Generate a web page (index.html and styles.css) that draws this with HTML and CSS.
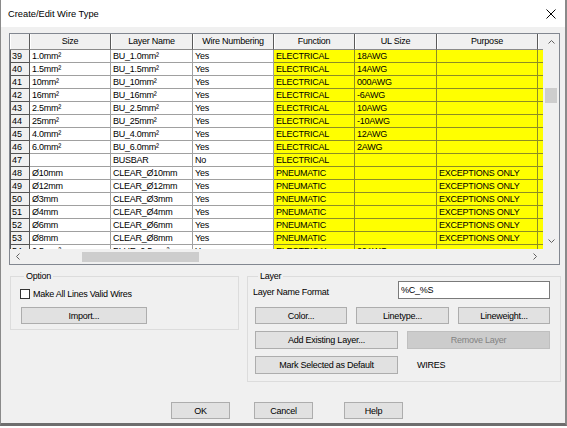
FILE: index.html
```html
<!DOCTYPE html>
<html lang="en">
<head>
    <meta charset="UTF-8">
    <title>Create/Edit Wire Type</title>
    <link rel="stylesheet" href="styles.css">
</head>
<body>
    <div class="window">
        <div class="titlebar">
            <span class="title">Create/Edit Wire Type</span>
            <span class="close">
                <svg width="10" height="10" viewBox="0 0 10 10"><path d="M0.5 0.5L9.5 9.5M9.5 0.5L0.5 9.5" stroke="#000" stroke-width="1"/></svg>
            </span>
        </div>
        <div class="content">
            <div class="grid">
                <div class="viewport">
                    <div class="row head">
                        <div class="c"></div><div class="c">Size</div><div class="c">Layer Name</div><div class="c">Wire Numbering</div><div class="c">Function</div><div class="c">UL Size</div><div class="c">Purpose</div><div class="c"></div>
                    </div>
                    <div class="row"><div class="c num">39</div><div class="c">1.0mm²</div><div class="c">BU_1.0mm²</div><div class="c">Yes</div><div class="c y">ELECTRICAL</div><div class="c y">18AWG</div><div class="c y"></div><div class="c y"></div></div>
                    <div class="row"><div class="c num">40</div><div class="c">1.5mm²</div><div class="c">BU_1.5mm²</div><div class="c">Yes</div><div class="c y">ELECTRICAL</div><div class="c y">14AWG</div><div class="c y"></div><div class="c y"></div></div>
                    <div class="row"><div class="c num">41</div><div class="c">10mm²</div><div class="c">BU_10mm²</div><div class="c">Yes</div><div class="c y">ELECTRICAL</div><div class="c y">000AWG</div><div class="c y"></div><div class="c y"></div></div>
                    <div class="row"><div class="c num">42</div><div class="c">16mm²</div><div class="c">BU_16mm²</div><div class="c">Yes</div><div class="c y">ELECTRICAL</div><div class="c y">-6AWG</div><div class="c y"></div><div class="c y"></div></div>
                    <div class="row"><div class="c num">43</div><div class="c">2.5mm²</div><div class="c">BU_2.5mm²</div><div class="c">Yes</div><div class="c y">ELECTRICAL</div><div class="c y">10AWG</div><div class="c y"></div><div class="c y"></div></div>
                    <div class="row"><div class="c num">44</div><div class="c">25mm²</div><div class="c">BU_25mm²</div><div class="c">Yes</div><div class="c y">ELECTRICAL</div><div class="c y">-10AWG</div><div class="c y"></div><div class="c y"></div></div>
                    <div class="row"><div class="c num">45</div><div class="c">4.0mm²</div><div class="c">BU_4.0mm²</div><div class="c">Yes</div><div class="c y">ELECTRICAL</div><div class="c y">12AWG</div><div class="c y"></div><div class="c y"></div></div>
                    <div class="row"><div class="c num">46</div><div class="c">6.0mm²</div><div class="c">BU_6.0mm²</div><div class="c">Yes</div><div class="c y">ELECTRICAL</div><div class="c y">2AWG</div><div class="c y"></div><div class="c y"></div></div>
                    <div class="row"><div class="c num">47</div><div class="c"></div><div class="c">BUSBAR</div><div class="c">No</div><div class="c y">ELECTRICAL</div><div class="c y"></div><div class="c y"></div><div class="c y"></div></div>
                    <div class="row"><div class="c num">48</div><div class="c">Ø10mm</div><div class="c">CLEAR_Ø10mm</div><div class="c">Yes</div><div class="c y">PNEUMATIC</div><div class="c y"></div><div class="c y">EXCEPTIONS ONLY</div><div class="c y"></div></div>
                    <div class="row"><div class="c num">49</div><div class="c">Ø12mm</div><div class="c">CLEAR_Ø12mm</div><div class="c">Yes</div><div class="c y">PNEUMATIC</div><div class="c y"></div><div class="c y">EXCEPTIONS ONLY</div><div class="c y"></div></div>
                    <div class="row"><div class="c num">50</div><div class="c">Ø3mm</div><div class="c">CLEAR_Ø3mm</div><div class="c">Yes</div><div class="c y">PNEUMATIC</div><div class="c y"></div><div class="c y">EXCEPTIONS ONLY</div><div class="c y"></div></div>
                    <div class="row"><div class="c num">51</div><div class="c">Ø4mm</div><div class="c">CLEAR_Ø4mm</div><div class="c">Yes</div><div class="c y">PNEUMATIC</div><div class="c y"></div><div class="c y">EXCEPTIONS ONLY</div><div class="c y"></div></div>
                    <div class="row"><div class="c num">52</div><div class="c">Ø6mm</div><div class="c">CLEAR_Ø6mm</div><div class="c">Yes</div><div class="c y">PNEUMATIC</div><div class="c y"></div><div class="c y">EXCEPTIONS ONLY</div><div class="c y"></div></div>
                    <div class="row"><div class="c num">53</div><div class="c">Ø8mm</div><div class="c">CLEAR_Ø8mm</div><div class="c">Yes</div><div class="c y">PNEUMATIC</div><div class="c y"></div><div class="c y">EXCEPTIONS ONLY</div><div class="c y"></div></div>
                    <div class="row"><div class="c num">54</div><div class="c">0.5mm²</div><div class="c">BLUE_0.5mm²</div><div class="c">Yes</div><div class="c y">ELECTRICAL</div><div class="c y">20AWG</div><div class="c y"></div><div class="c y"></div></div>
                </div>
                <div class="vscroll">
                    <div class="arrow"><svg width="7" height="4" viewBox="0 0 7 4"><polyline points="0.5,3.5 3.5,0.5 6.5,3.5" fill="none" stroke="#606060"/></svg></div>
                    <div class="track"><div class="thumb"></div></div>
                    <div class="arrow"><svg width="7" height="4" viewBox="0 0 7 4"><polyline points="0.5,0.5 3.5,3.5 6.5,0.5" fill="none" stroke="#606060"/></svg></div>
                </div>
                <div class="hscroll">
                    <div class="arrow"><svg width="4" height="7" viewBox="0 0 4 7"><polyline points="3.5,0.5 0.5,3.5 3.5,6.5" fill="none" stroke="#606060"/></svg></div>
                    <div class="track"><div class="thumb"></div></div>
                    <div class="arrow"><svg width="4" height="7" viewBox="0 0 4 7"><polyline points="0.5,0.5 3.5,3.5 0.5,6.5" fill="none" stroke="#606060"/></svg></div>
                </div>
                <div class="sizer"></div>
            </div>

            <div class="lower">
                <fieldset class="group option-group">
                    <legend>Option</legend>
                    <label class="check-row"><input type="checkbox"> Make All Lines Valid Wires</label>
                    <button type="button" class="btn import-btn">Import...</button>
                </fieldset>
                <fieldset class="group layer-group">
                    <legend>Layer</legend>
                    <div class="format-row">
                        <label for="layerFormat">Layer Name Format</label>
                        <input type="text" id="layerFormat" value="%C_%S">
                    </div>
                    <div class="btn-row">
                        <button type="button" class="btn third">Color...</button>
                        <button type="button" class="btn third wide">Linetype...</button>
                        <button type="button" class="btn third">Lineweight...</button>
                    </div>
                    <div class="btn-row">
                        <button type="button" class="btn half">Add Existing Layer...</button>
                        <button type="button" class="btn half" disabled>Remove Layer</button>
                    </div>
                    <div class="btn-row">
                        <button type="button" class="btn half">Mark Selected as Default</button>
                        <span class="default-name">WIRES</span>
                    </div>
                </fieldset>
            </div>

            <div class="footer">
                <button type="button" class="btn dlg">OK</button>
                <button type="button" class="btn dlg cancel">Cancel</button>
                <button type="button" class="btn dlg help">Help</button>
            </div>
        </div>
    </div>
</body>
</html>
```

FILE: styles.css
```css
body {
    margin: 0;
    padding: 0;
    background-color: #fff;
    font-family: "Liberation Sans", Arial, sans-serif;
    font-size: 9px;
    letter-spacing: -0.25px;
    color: #000;
}
.window {
    width: 567px;
    height: 426px;
    box-sizing: border-box;
    border-left: 1px solid #8a8a8a;
    border-right: 2px solid #8a8a8a;
    border-bottom: 3px solid #6e6e6e;
    background-color: #f0f0f0;
    display: flex;
    flex-direction: column;
}
.titlebar {
    height: 27px;
    flex: none;
    background-color: #fff;
    display: flex;
    align-items: center;
    justify-content: space-between;
    padding-left: 7px;
}
.title {
    font-size: 9.3px;
    letter-spacing: 0;
}
.close {
    width: 28px;
    height: 27px;
    display: flex;
    align-items: center;
    justify-content: center;
}
.content {
    padding: 6px 0 0 8px;
}

/* grid */
.grid {
    width: 551px;
    height: 232px;
    box-sizing: border-box;
    border: 1px solid #828790;
    display: grid;
    grid-template-columns: 533px 16px;
    grid-template-rows: 215px 15px;
    background-color: #f0f0f0;
}
.viewport {
    overflow: hidden;
    background-color: #fff;
}
.row {
    display: grid;
    grid-template-columns: 20px 81px 82px 81px 81px 82px 101px 40px;
    height: 13px;
}
.c {
    box-sizing: border-box;
    border-right: 1px solid #a0a0a0;
    border-bottom: 1px solid #a0a0a0;
    padding-left: 2px;
    line-height: 12px;
    white-space: nowrap;
    overflow: hidden;
}
.c.y {
    background-color: #ffff00;
    border-color: #8d8d24;
}
.c.num {
    background-color: #f0f0f0;
    border-right-color: #555;
    border-bottom-color: #555;
    box-shadow: inset 1px 0 0 #555;
    padding-left: 2px;
    letter-spacing: 0;
}
.row.head {
    height: 16px;
}
.head .c {
    background-color: #f0f0f0;
    border-right-color: #5a5a5a;
    border-bottom-color: #8a8a8a;
    box-shadow: inset 1px 0 0 #fff;
    text-align: center;
    line-height: 15px;
    padding-left: 0;
}
.vscroll {
    display: flex;
    flex-direction: column;
}
.hscroll {
    display: flex;
}
.arrow {
    flex: none;
    width: 16px;
    height: 16px;
    display: flex;
    align-items: center;
    justify-content: center;
}
.hscroll .arrow {
    height: 15px;
}
.track {
    flex: 1;
}
.vscroll .thumb {
    margin: 38px 2px 0;
    height: 15px;
    background-color: #cdcdcd;
}
.hscroll .thumb {
    margin: 3px 0 0 56px;
    width: 117px;
    height: 10px;
    background-color: #cdcdcd;
}

/* option and layer groups */
.lower {
    display: flex;
    margin-top: 6px;
    padding-left: 1px;
}
.group {
    margin: 0;
    padding: 0;
    border: 1px solid #dcdcdc;
    box-sizing: border-box;
}
.group legend {
    padding: 0 2px;
    margin-left: 4px;
    line-height: 10px;
}
.option-group {
    width: 229px;
    height: 59px;
    padding-left: 9px;
}
.check-row {
    display: flex;
    align-items: center;
    height: 12px;
    margin-top: 7px;
}
.check-row input {
    appearance: none;
    -webkit-appearance: none;
    width: 10px;
    height: 10px;
    margin: 0 3px 0 0;
    border: 1px solid #333;
    background-color: #fff;
    box-sizing: border-box;
}
.btn {
    font-family: inherit;
    font-size: 9px;
    letter-spacing: -0.25px;
    color: #000;
    background-color: #e1e1e1;
    border: 1px solid #adadad;
    padding: 0;
    height: 17px;
    box-sizing: border-box;
}
.btn:disabled {
    background-color: #cccccc;
    border-color: #bfbfbf;
    color: #838383;
}
.import-btn {
    display: block;
    width: 126px;
    margin: 7px 0 0 1px;
}
.layer-group {
    width: 312px;
    height: 111px;
    margin-left: 8px;
    padding: 0 10px 0 7px;
}
.layer-group legend {
    margin-left: 3px;
}
.format-row {
    display: flex;
    align-items: center;
    justify-content: space-between;
    height: 18px;
}
.format-row label {
    margin-left: -2px;
    padding-top: 4px;
}
.format-row input {
    width: 152px;
    height: 18px;
    box-sizing: border-box;
    border: 1px solid #7a7a7a;
    padding: 0 2px;
    font-family: inherit;
    font-size: 9px;
    letter-spacing: -0.25px;
}
.btn-row {
    display: flex;
    align-items: center;
    gap: 9px;
    margin-top: 8px;
}
.btn-row + .btn-row {
    margin-top: 7px;
}
.btn.third {
    width: 92px;
}
.btn.third.wide {
    width: 93px;
}
.btn.half {
    width: 143px;
    height: 18px;
}
.default-name {
    margin-left: 10px;
}

.footer {
    display: flex;
    margin-top: 20px;
    padding-left: 162px;
}
.btn.dlg {
    width: 59px;
    height: 17px;
}
.btn.cancel {
    margin-left: 24px;
}
.btn.help {
    margin-left: 31px;
}
```
